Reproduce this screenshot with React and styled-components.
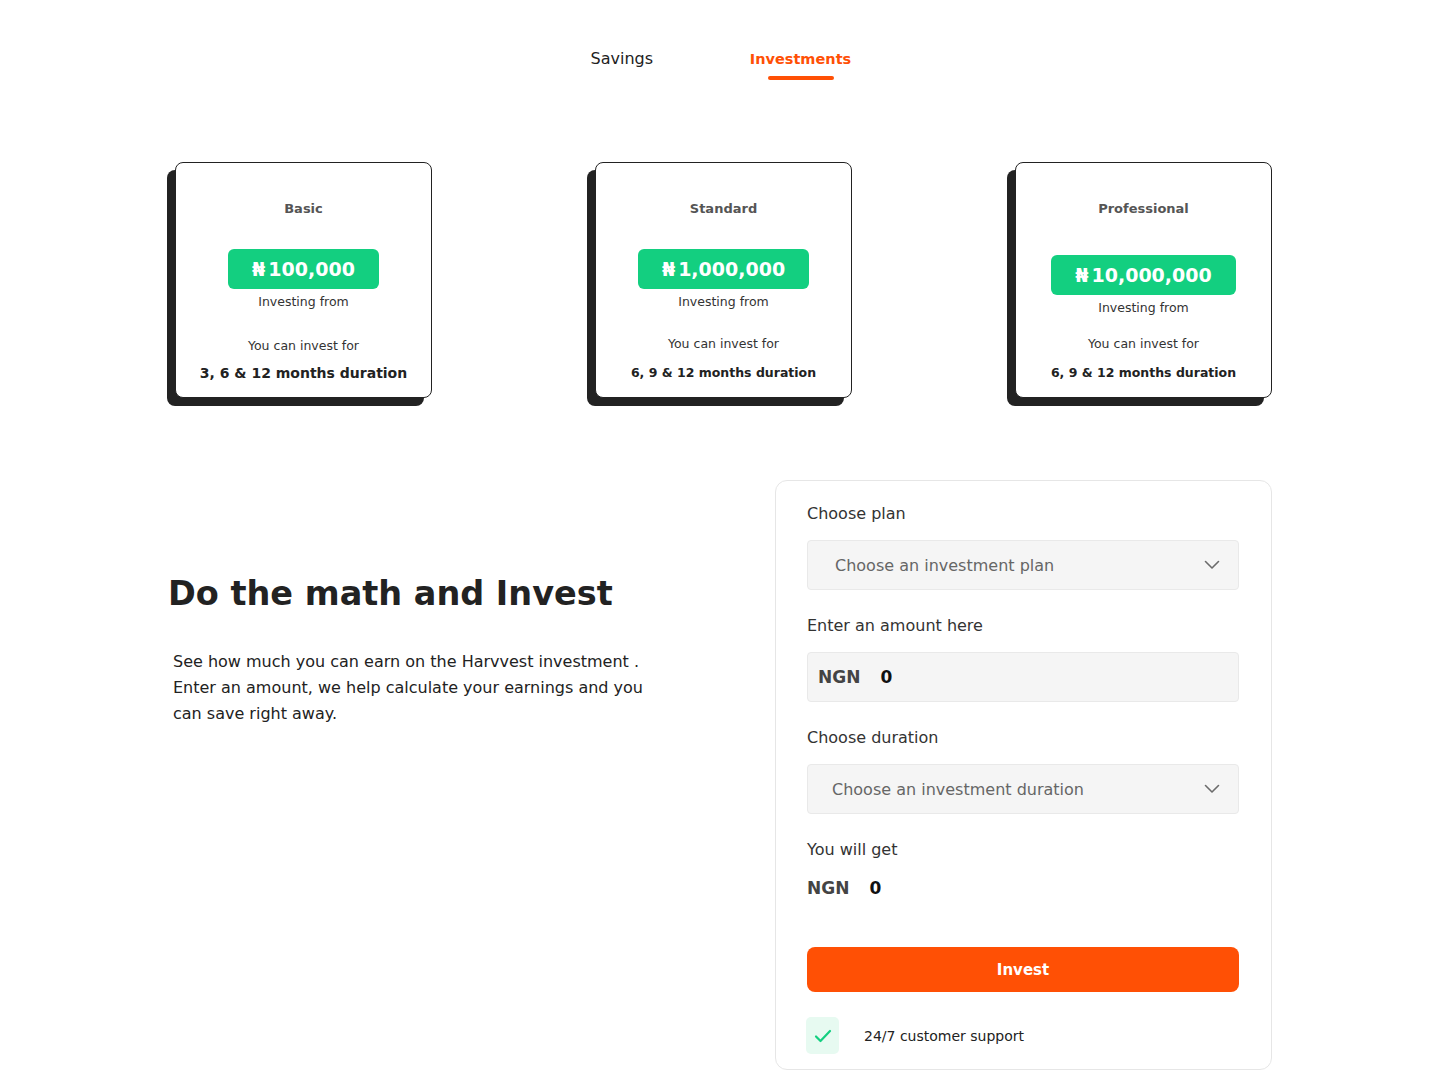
import React, { useState } from 'react'
import styled, { createGlobalStyle } from 'styled-components'

const FONT = `"DejaVu Sans", "Noto Sans", sans-serif`

const GlobalStyle = createGlobalStyle`
  * { box-sizing: border-box; }
  body {
    margin: 0;
    background: #ffffff;
    font-family: ${FONT};
    color: #222222;
  }
`

const plans = [
  { id: 1, name: 'Basic', amount: '100,000', duration: '3, 6 & 12 months duration', big: true },
  { id: 2, name: 'Standard', amount: '1,000,000', duration: '6, 9 & 12 months duration' },
  { id: 3, name: 'Professional', amount: '10,000,000', duration: '6, 9 & 12 months duration', shift: true },
]

function Chevron() {
  return (
    <svg width="16" height="10" viewBox="0 0 16 10" fill="none">
      <path d="M1.5 1.5L8 8l6.5-6.5" stroke="#6b6b6b" strokeWidth="1.6" strokeLinecap="round" strokeLinejoin="round" />
    </svg>
  )
}

function Check() {
  return (
    <svg width="18" height="14" viewBox="0 0 18 14" fill="none">
      <path d="M2 7.5l4.5 4.5L16 2" stroke="#13cf80" strokeWidth="2.2" strokeLinecap="round" strokeLinejoin="round" />
    </svg>
  )
}

function App() {
  const [tab, setTab] = useState('investments')

  return (
    <PageStyled>
      <GlobalStyle />
      <Tabs>
        <Tab active={tab === 'savings'} onClick={() => setTab('savings')}>
          Savings
          <Underline active={tab === 'savings'} />
        </Tab>
        <Tab active={tab === 'investments'} onClick={() => setTab('investments')}>
          Investments
          <Underline active={tab === 'investments'} />
        </Tab>
      </Tabs>

      <Plans>
        {plans.map(plan => (
          <PlanCard key={plan.id}>
            <div>
              <PlanName>{plan.name}</PlanName>
              <Badge shift={plan.shift}>
                <span>₦</span>{plan.amount}
              </Badge>
              <Small>Investing from</Small>
            </div>
            <div>
              <Small>You can invest for</Small>
              <Duration big={plan.big}>{plan.duration}</Duration>
            </div>
          </PlanCard>
        ))}
      </Plans>

      <Calculator>
        <Intro>
          <h2>Do the math and Invest</h2>
          <p>
            See how much you can earn on the Harvvest investment .<br />
            Enter an amount, we help calculate your earnings and you<br />
            can save right away.
          </p>
        </Intro>

        <FormCard>
          <Label>Choose plan</Label>
          <Select indent={27}>
            <span>Choose an investment plan</span>
            <Chevron />
          </Select>

          <Label>Enter an amount here</Label>
          <AmountInput>
            <Currency>NGN</Currency>
            <Value>0</Value>
          </AmountInput>

          <Label>Choose duration</Label>
          <Select indent={24}>
            <span>Choose an investment duration</span>
            <Chevron />
          </Select>

          <Label>You will get</Label>
          <Result>
            <Currency>NGN</Currency>
            <Value>0</Value>
          </Result>

          <InvestButton>Invest</InvestButton>

          <Support>
            <CheckBox><Check /></CheckBox>
            <span>24/7 customer support</span>
          </Support>
        </FormCard>
      </Calculator>
    </PageStyled>
  )
}

const PageStyled = styled.div`
  width: 1104px;
  margin: 0 auto;
  padding-bottom: 8px;
`

const Tabs = styled.nav`
  display: flex;
  justify-content: center;
  gap: 95px;
  padding-top: 49px;
`

const Tab = styled.button`
  display: flex;
  flex-direction: column;
  align-items: center;
  gap: 7px;
  padding: 0;
  border: none;
  background: none;
  cursor: pointer;
  font-family: ${FONT};
  font-size: ${p => (p.active ? '14.5px' : '16px')};
  line-height: 20px;
  font-weight: ${p => (p.active ? 700 : 400)};
  color: ${p => (p.active ? '#ff5005' : '#222222')};
`

const Underline = styled.span`
  width: 66px;
  height: 4px;
  border-radius: 4px;
  background: ${p => (p.active ? '#ff5005' : 'transparent')};
`

const Plans = styled.div`
  display: flex;
  justify-content: flex-end;
  gap: 163px;
  margin-top: 82px;
`

const PlanCard = styled.div`
  width: 257px;
  height: 236px;
  display: flex;
  flex-direction: column;
  justify-content: space-between;
  align-items: center;
  text-align: center;
  padding: 37px 10px 14px;
  background: #ffffff;
  border: 1px solid #222222;
  border-radius: 8px;
  box-shadow: -8px 8px 0 #222222;
`

const PlanName = styled.div`
  font-size: 13px;
  line-height: 18px;
  font-weight: 700;
  color: #555555;
`

const Badge = styled.div`
  display: inline-flex;
  align-items: center;
  height: 40px;
  padding: 0 24px;
  margin-top: ${p => (p.shift ? '37px' : '31px')};
  margin-bottom: 5px;
  border-radius: 6px;
  background: #13cf80;
  color: #ffffff;
  font-size: 19px;
  font-weight: 700;

  span {
    margin-right: 3px;
  }
`

const Small = styled.div`
  font-size: 12.5px;
  line-height: 16px;
  color: #333333;
`

const Duration = styled.div`
  margin-top: ${p => (p.big ? '9px' : '11px')};
  font-size: ${p => (p.big ? '14px' : '12.5px')};
  line-height: 20px;
  font-weight: 700;
  color: #222222;
`

const Calculator = styled.section`
  display: flex;
  justify-content: space-between;
  align-items: flex-start;
  margin-top: 82px;
`

const Intro = styled.div`
  padding-top: 92px;

  h2 {
    margin: 0 0 33px;
    font-size: 33.5px;
    line-height: 44px;
    font-weight: 700;
    color: #222222;
  }

  p {
    margin: 0;
    padding-left: 5px;
    font-size: 16px;
    line-height: 26px;
    color: #222222;
  }
`

const FormCard = styled.div`
  width: 497px;
  display: flex;
  flex-direction: column;
  padding: 23px 32px 15px 31px;
  border: 1px solid #e6e6e6;
  border-radius: 12px;
  background: #ffffff;
`

const Label = styled.div`
  font-size: 16px;
  line-height: 20px;
  color: #333333;
  margin-bottom: 16px;
`

const Select = styled.div`
  height: 50px;
  display: flex;
  align-items: center;
  justify-content: space-between;
  padding: 0 18px 0 ${p => p.indent}px;
  margin-bottom: 26px;
  background: #f5f5f5;
  border: 1px solid #e9e9e9;
  border-radius: 4px;
  font-size: 16px;
  color: #666666;
`

const AmountInput = styled.div`
  height: 50px;
  display: flex;
  align-items: center;
  gap: 20px;
  padding: 0 10px;
  margin-bottom: 26px;
  background: #f5f5f5;
  border: 1px solid #e9e9e9;
  border-radius: 4px;
`

const Result = styled.div`
  display: flex;
  align-items: center;
  gap: 20px;
  height: 22px;
  margin-top: 1px;
`

const Currency = styled.span`
  font-size: 17px;
  font-weight: 700;
  color: #444444;
`

const Value = styled.span`
  font-size: 17px;
  font-weight: 700;
  color: #111111;
`

const InvestButton = styled.button`
  height: 45px;
  margin-top: 48px;
  border: none;
  border-radius: 8px;
  background: #ff5005;
  color: #ffffff;
  font-family: ${FONT};
  font-size: 15px;
  font-weight: 700;
  cursor: pointer;
`

const Support = styled.div`
  display: flex;
  align-items: center;
  gap: 25px;
  margin-top: 25px;
  font-size: 14px;
  color: #222222;
`

const CheckBox = styled.div`
  width: 33px;
  height: 37px;
  margin-left: -1px;
  display: flex;
  align-items: center;
  justify-content: center;
  border-radius: 5px;
  background: #e7faf1;
`

export default App
